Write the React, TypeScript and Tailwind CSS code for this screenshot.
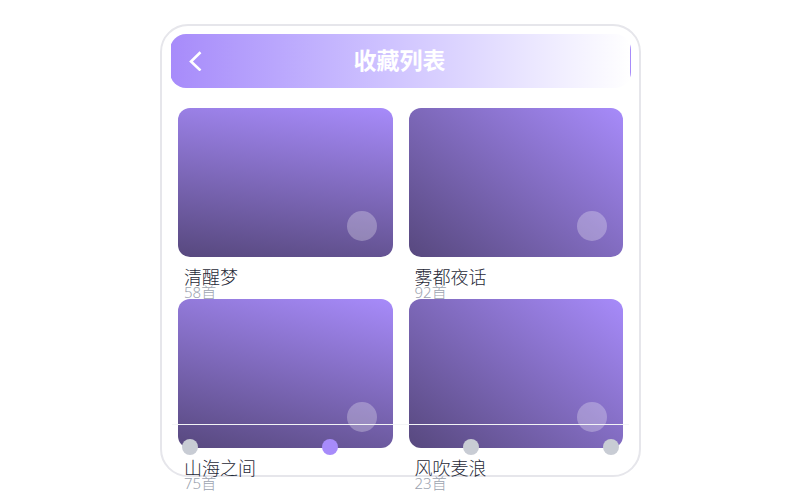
import { clsx } from 'clsx'

const albums = [
  { title: '清醒梦', count: 58, cover: 'bg-[linear-gradient(8deg,#57487e,#a78bfa)]' },
  { title: '雾都夜话', count: 92, cover: 'bg-[linear-gradient(38deg,#57487e,#a78bfa)]' },
  { title: '山海之间', count: 75, cover: 'bg-[linear-gradient(14deg,#57487e,#a78bfa)]' },
  { title: '风吹麦浪', count: 23, cover: 'bg-[linear-gradient(38deg,#57487e,#a78bfa)]' },
]

const tabs = [
  { label: '首页', active: false },
  { label: '收藏', active: true },
  { label: '发现', active: false },
  { label: '我的', active: false },
]

function Header() {
  return (
    <header className="relative flex h-[54px] items-center justify-center rounded-2xl border border-transparent bg-linear-to-r from-[#a78bfa] to-white">
      <button type="button" aria-label="返回" className="absolute left-4 flex size-5 items-center justify-center">
        <svg viewBox="0 0 20 20" className="size-5" fill="none" stroke="white" strokeWidth="2.6">
          <path d="M13.5 1.2 L4 10.5 L13.5 19.5" />
        </svg>
      </button>
      <h1 className="pr-0.5 pb-0.5 text-[23px] leading-8 font-bold text-white">收藏列表</h1>
    </header>
  )
}

export default function App() {
  return (
    <div className="flex h-screen justify-center pt-6 pb-[23px] pl-px font-['Noto_Sans','Noto_Sans_CJK_SC',sans-serif]">
      <main className="relative h-full w-full max-w-[481px] rounded-[28px] border-2 border-[#e6e6eb] bg-white p-2">
        <Header />
        <section className="grid grid-cols-2 gap-x-4 px-2 pt-5">
          {albums.map((a) => (
            <article key={a.title}>
              <div className={clsx('relative h-[149px] rounded-xl', a.cover)}>
                <button
                  type="button"
                  aria-label={`播放 ${a.title}`}
                  className="absolute right-4 bottom-4 size-[30px] rounded-full bg-white/27"
                />
              </div>
              <div className="h-[42px] px-1.5 pt-[9px] font-light">
                <h2 className="text-lg leading-[22px] text-[#1f2937]">{a.title}</h2>
                <p className="text-[15px] leading-2 text-[#9ca3af]">{a.count}首</p>
              </div>
            </article>
          ))}
        </section>
        <nav className="absolute inset-x-2.5 bottom-0 flex h-[51px] items-start justify-between border-t border-[#f3f4f6] px-2.5 pt-3.5">
          {tabs.map((t) => (
            <button
              key={t.label}
              type="button"
              aria-label={t.label}
              className={clsx('size-4 rounded-full', t.active ? 'bg-[#a78bfa]' : 'bg-[#c8ccd4]')}
            />
          ))}
        </nav>
      </main>
    </div>
  )
}
